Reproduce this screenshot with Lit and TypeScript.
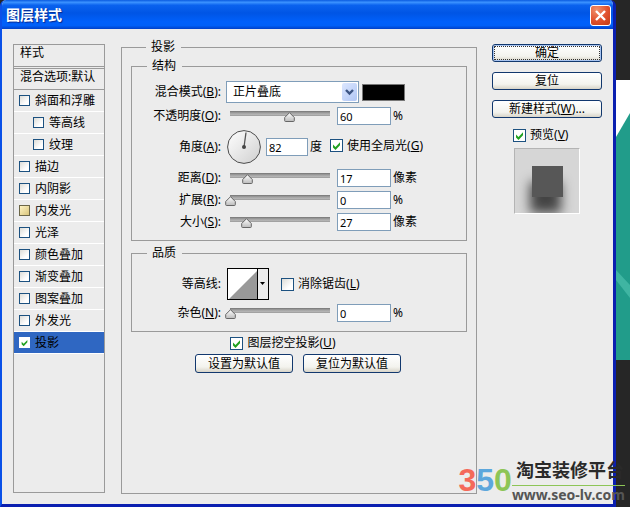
import { LitElement, html, css, svg } from "lit";
import { customElement } from "lit/decorators.js";
import { classMap } from "lit/directives/class-map.js";

interface Effect {
  name: string;
  sub?: boolean;
  hot?: boolean;
  on?: boolean;
}

const EFFECTS: Effect[] = [
  { name: "斜面和浮雕" },
  { name: "等高线", sub: true },
  { name: "纹理", sub: true },
  { name: "描边" },
  { name: "内阴影" },
  { name: "内发光", hot: true },
  { name: "光泽" },
  { name: "颜色叠加" },
  { name: "渐变叠加" },
  { name: "图案叠加" },
  { name: "外发光" },
  { name: "投影", on: true },
];

@customElement("app-root")
export class AppRoot extends LitElement {
  static styles = css`
    :host {
      display: block;
      position: relative;
      font: 12px/14px "Noto Sans", "Noto Sans CJK SC", sans-serif;
      color: #000;
    }
    * {
      box-sizing: border-box;
    }
    .desktop {
      display: flex;
      min-height: 100vh;
      background: #262626;
    }
    .window {
      flex: 1;
      min-width: 0;
      display: flex;
      flex-direction: column;
      border: solid #0831d9;
      border-width: 0 3px 3px 2px;
      border-color: #0a2fc4 #0a1fb0 #0a1fb0 #0a50e8;
      border-radius: 6px 6px 0 0;
      background: #ececec;
      overflow: hidden;
    }
    .backdrop {
      width: 14px;
      flex: none;
      padding-top: 80px;
    }
    .backdrop svg {
      display: block;
    }
    .titlebar {
      height: 29px;
      flex: none;
      display: flex;
      align-items: center;
      justify-content: space-between;
      padding: 1px 2px 0 4px;
      background: linear-gradient(#0a5be0, #3b92ff 8%, #0a62ee 18%, #0055e5 45%, #0060fb 75%, #0060f8 88%, #0040c8);
    }
    h1 {
      margin: 0;
      font-size: 14px;
      line-height: 20px;
      color: #fff;
      text-shadow: 1px 1px 1px #06298f;
    }
    .close {
      width: 21px;
      height: 21px;
      padding: 0;
      border: 1px solid #fff;
      border-radius: 3px;
      background: radial-gradient(circle at 30% 20%, #f0906c, #e0502c 55%, #c03a14);
    }
    .close svg {
      display: block;
      margin: auto;
    }
    .body {
      flex: 1;
      display: grid;
      grid-template-columns: 92px minmax(0, 1fr) 110px;
      padding: 0 11px 10px;
    }
    .styles {
      margin: 15px 0 1px;
      border: 1px solid #9a9a9a;
    }
    .styles h2,
    .styles h3 {
      margin: 0;
      padding: 1px 0 0 6px;
      font-size: 12px;
      font-weight: 400;
      line-height: 14px;
      white-space: nowrap;
      border-bottom: 1px solid #9a9a9a;
      height: 22px;
    }
    .styles h3 {
      margin-top: 1px;
      border-top: 1px solid #9a9a9a;
    }
    ul {
      margin: 0;
      padding: 0;
      list-style: none;
    }
    li {
      height: 22px;
      border-bottom: 1px solid #fff;
      padding-left: 5px;
      display: flex;
      align-items: center;
    }
    li.sub {
      padding-left: 19px;
    }
    li.on {
      background: #2f67c2;
    }
    .check {
      display: inline-flex;
      align-items: center;
      gap: 4px;
      white-space: nowrap;
    }
    .check input {
      appearance: none;
      flex: none;
      width: 13px;
      height: 13px;
      margin: 0;
      border: 1px solid #1c5180;
      background: linear-gradient(135deg, #dcdcd7, #fff 70%);
    }
    li .check input {
      width: 11px;
      height: 11px;
    }
    li .check {
      gap: 5px;
    }
    .check input:checked {
      background: #fff
        url("data:image/svg+xml,%3Csvg xmlns='http://www.w3.org/2000/svg' viewBox='0 0 11 11'%3E%3Cpath d='M2 4.5v3L4.5 10 9 5.3v-3L4.5 7z' fill='%2321a121'/%3E%3C/svg%3E")
        center / 11px 11px;
    }
    li .check input:checked {
      border-color: #fff;
      background-size: 9px 9px;
    }
    .hot .check input {
      background: linear-gradient(135deg, #fff4c4, #d8c47c);
      border-color: #6b6648;
    }
    fieldset {
      min-width: 0;
      margin: 0;
      border: 1px solid #9a9a9a;
      padding: 0;
    }
    legend {
      height: 14px;
      margin-left: 15px;
      padding: 0 6px 0 5px;
    }
    .panel {
      margin: 11px 15px 0 16px;
      padding: 5px 9px 0;
    }
    .group {
      display: grid;
      gap: 4px;
      padding: 8px 0 9px;
    }
    .group + .group {
      margin-top: 5px;
    }
    .row {
      display: flex;
      align-items: center;
      height: 18px;
      white-space: nowrap;
    }
    .row.blend {
      height: 22px;
    }
    .row.angle {
      height: 36px;
    }
    .row.contour {
      height: 32px;
    }
    .name {
      width: 89px;
      margin-right: 4px;
      flex: none;
      text-align: right;
    }
    .select {
      position: relative;
      width: 133px;
      height: 22px;
      margin: 0 3px 0 1px;
    }
    select {
      appearance: none;
      width: 100%;
      height: 22px;
      padding: 0 20px 0 6px;
      border: 1px solid #7f9db9;
      border-radius: 0;
      background: #fff;
      font: inherit;
      color: inherit;
    }
    .arrow {
      position: absolute;
      top: 2px;
      right: 2px;
      width: 15px;
      height: 18px;
      border-radius: 2px;
      background: linear-gradient(135deg, #dce7ff, #b0c6f4);
      pointer-events: none;
    }
    .swatch {
      width: 43px;
      height: 17px;
      padding: 0;
      border: 1px solid #777;
      border-radius: 0;
      background: #000;
    }
    .num {
      width: 54px;
      height: 18px;
      margin: 0 2px;
      padding: 0 0 0 2px;
      border: 1px solid #7f9db9;
      border-radius: 0;
      background: #fff;
      font: 11px/16px "Noto Sans", sans-serif;
    }
    .num.short {
      width: 42px;
      margin-left: 5px;
    }
    .slider {
      appearance: none;
      width: 110px;
      height: 14px;
      margin: 0;
      background: none;
    }
    .slider::-webkit-slider-runnable-track {
      height: 11px;
      background: linear-gradient(#747474, #a2a2a2 2px, #b8b8b8 4px, #8c8c8c 5px, transparent 5px) 5px 0 / 100px 5px no-repeat;
    }
    .slider::-webkit-slider-thumb {
      appearance: none;
      width: 11px;
      height: 10px;
      margin-top: 1px;
      border: 0;
      background: url("data:image/svg+xml,%3Csvg xmlns='http://www.w3.org/2000/svg' viewBox='0 0 11 10'%3E%3Cdefs%3E%3ClinearGradient id='g' x2='0' y2='1'%3E%3Cstop stop-color='%23fff'/%3E%3Cstop offset='1' stop-color='%23bcbcbc'/%3E%3C/linearGradient%3E%3C/defs%3E%3Cpath d='M5.5.7 10.3 5.5v3.2a.8.8 0 0 1-.8.8h-8a.8.8 0 0 1-.8-.8V5.5z' fill='url(%23g)' stroke='%23666'/%3E%3C/svg%3E")
        center / 11px 10px;
    }
    .dial {
      flex: none;
      margin-left: 2px;
    }
    .global {
      margin-left: 8px;
    }
    .picker {
      display: flex;
      width: 42px;
      height: 32px;
      margin: 0 12px 0 2px;
      padding: 0;
      border: 1px solid #000;
      border-radius: 0;
      background: #ececec;
    }
    .below {
      display: flex;
      flex-direction: column;
      align-items: center;
      gap: 4px;
      padding: 4px 2px 0 0;
    }
    .below .check {
      margin-right: 30px;
    }
    .defaults {
      display: flex;
      gap: 10px;
    }
    .push {
      height: 19px;
      width: 98px;
      padding: 0;
      border: 1px solid #12386e;
      border-radius: 3px;
      background: linear-gradient(#fff, #f3f3ee 70%, #d8d4c8);
      font: inherit;
      line-height: 16px;
      color: inherit;
      white-space: nowrap;
    }
    .actions {
      display: flex;
      flex-direction: column;
      gap: 10px;
      padding-top: 15px;
    }
    .actions .push {
      width: 100%;
      height: 18px;
      flex: none;
    }
    .actions .primary {
      box-shadow: inset 0 0 0 1px #a8c4f0;
      outline: 1px dotted #333;
      outline-offset: -3px;
    }
    .sample {
      display: flex;
      flex-direction: column;
      gap: 6px;
      padding-left: 21px;
    }
    .preview {
      width: 66px;
      height: 66px;
      display: grid;
      place-items: center;
      margin-left: 1px;
      border: 1px solid #b4b4b4;
      border-right-color: #fff;
      border-bottom-color: #fff;
      background: #d6d6d6;
      overflow: hidden;
    }
    .preview div {
      width: 31px;
      height: 31px;
      background: #575757;
      box-shadow: -2px 16px 12px 0 #444;
    }
    .brand {
      position: absolute;
      right: 5px;
      bottom: 3px;
      display: flex;
      align-items: center;
      white-space: nowrap;
      pointer-events: none;
    }
    .digits {
      font: bold 32px/48px "Liberation Sans", sans-serif;
    }
    .three {
      color: #f4695a;
    }
    .five {
      color: #5da7dc;
    }
    .zero {
      color: #8dc557;
    }
    .brand p {
      margin: 0;
      padding: 0 0 2px 4px;
      color: #2a2a2a;
      font: bold 18px/28px "Noto Sans CJK SC", sans-serif;
      border-bottom: 1px solid #8dc557;
    }
    .brand .site {
      padding: 0;
      border: 0;
      color: #555;
      font: bold 14px/18px "Noto Sans", sans-serif;
    }
  `;

  private mnemonic(text: string, key: string, tail = "") {
    return html`${text}(<u>${key}</u>)${tail}`;
  }

  private check(text: unknown, on = false) {
    return html`<label class="check"><input type="checkbox" .checked=${on} /><span>${text}</span></label>`;
  }

  private amount(id: string, text: string, key: string, value: number, unit: string, position = value) {
    return html`<div class="row">
      <label class="name" for=${id}>${this.mnemonic(text, key, ":")}</label>
      <input class="slider" type="range" aria-label=${text} .value=${String(position)} />
      <input class="num" id=${id} type="text" .value=${String(value)} />
      <span>${unit}</span>
    </div>`;
  }

  private dial() {
    return svg`<svg class="dial" width="34" height="34" viewBox="0 0 34 34">
      <defs><linearGradient id="face" x2="1" y2="1"><stop stop-color="#fff"/><stop offset="1" stop-color="#cfcfcf"/></linearGradient></defs>
      <circle cx="17" cy="17" r="16.4" fill="url(#face)" stroke="#4c4c4c"/>
      <path d="M17 17 19 2.5" stroke="#555" stroke-width="1.3"/>
      <circle cx="17" cy="17" r="2" fill="#444"/>
    </svg>`;
  }

  render() {
    return html`
      <div class="desktop">
        <main class="window">
          <header class="titlebar">
            <h1>图层样式</h1>
            <button class="close" aria-label="关闭">
              <svg width="19" height="19" viewBox="0 0 19 19">
                <path d="M5 5 14 14M14 5 5 14" stroke="#fff" stroke-width="2.4" />
              </svg>
            </button>
          </header>
          <div class="body">
            <nav class="styles">
              <h2>样式</h2>
              <h3>混合选项:默认</h3>
              <ul>
                ${EFFECTS.map(
                  (e) => html`<li class=${classMap({ sub: !!e.sub, hot: !!e.hot, on: !!e.on })}>
                    ${this.check(e.name, e.on)}
                  </li>`
                )}
              </ul>
            </nav>
            <fieldset class="panel">
              <legend>投影</legend>
              <fieldset class="group">
                <legend>结构</legend>
                <div class="row blend">
                  <label class="name" for="mode">${this.mnemonic("混合模式", "B", ":")}</label>
                  <div class="select">
                    <select id="mode"><option>正片叠底</option></select>
                    <svg class="arrow" viewBox="0 0 15 18">
                      <path d="M4 7 7.5 10.5 11 7" fill="none" stroke="#3d5584" stroke-width="2.4" />
                    </svg>
                  </div>
                  <button class="swatch" aria-label="颜色"></button>
                </div>
                ${this.amount("opacity", "不透明度", "O", 60, "%")}
                <div class="row angle">
                  <label class="name" for="angle">${this.mnemonic("角度", "A", ":")}</label>
                  ${this.dial()}
                  <input class="num short" id="angle" type="text" .value=${"82"} />
                  <span>度</span>
                  <span class="global">${this.check(this.mnemonic("使用全局光", "G"), true)}</span>
                </div>
                ${this.amount("distance", "距离", "D", 17, "像素")}
                ${this.amount("spread", "扩展", "R", 0, "%")}
                ${this.amount("size", "大小", "S", 27, "像素", 16)}
              </fieldset>
              <fieldset class="group">
                <legend>品质</legend>
                <div class="row contour">
                  <label class="name" for="contour">等高线:</label>
                  <button class="picker" id="contour">
                    <svg width="40" height="30" viewBox="0 0 40 30">
                      <path d="M0 0H29V30H0z" fill="#fff" />
                      <path d="M1 30 29 2V30z" fill="#999" />
                      <path d="M29.5 0V30" stroke="#000" />
                      <path d="M32 13h5l-2.5 3z" />
                    </svg>
                  </button>
                  ${this.check(this.mnemonic("消除锯齿", "L"))}
                </div>
                ${this.amount("noise", "杂色", "N", 0, "%")}
              </fieldset>
              <div class="below">
                ${this.check(this.mnemonic("图层挖空投影", "U"), true)}
                <div class="defaults">
                  <button class="push">设置为默认值</button>
                  <button class="push">复位为默认值</button>
                </div>
              </div>
            </fieldset>
            <div class="actions">
              <button class="push primary">确定</button>
              <button class="push">复位</button>
              <button class="push">${this.mnemonic("新建样式", "W", "...")}</button>
              <div class="sample">
                ${this.check(this.mnemonic("预览", "V"), true)}
                <div class="preview"><div></div></div>
              </div>
            </div>
          </div>
        </main>
        <div class="backdrop">
          <svg width="14" height="280" viewBox="0 0 14 280">
            <path d="M0 0H14V280H0z" fill="#fff" />
            <path d="M0 57 14 33V280H0z" fill="#219c8a" />
            <path d="M0 190 14 205V218L0 200z" fill="#3fb5a2" />
          </svg>
        </div>
      </div>
      <div class="brand">
        <span class="digits"><span class="three">3</span><span class="five">5</span><span class="zero">0</span></span>
        <div>
          <p>淘宝装修平台</p>
          <p class="site">www.seo-lv.com</p>
        </div>
      </div>
    `;
  }
}
